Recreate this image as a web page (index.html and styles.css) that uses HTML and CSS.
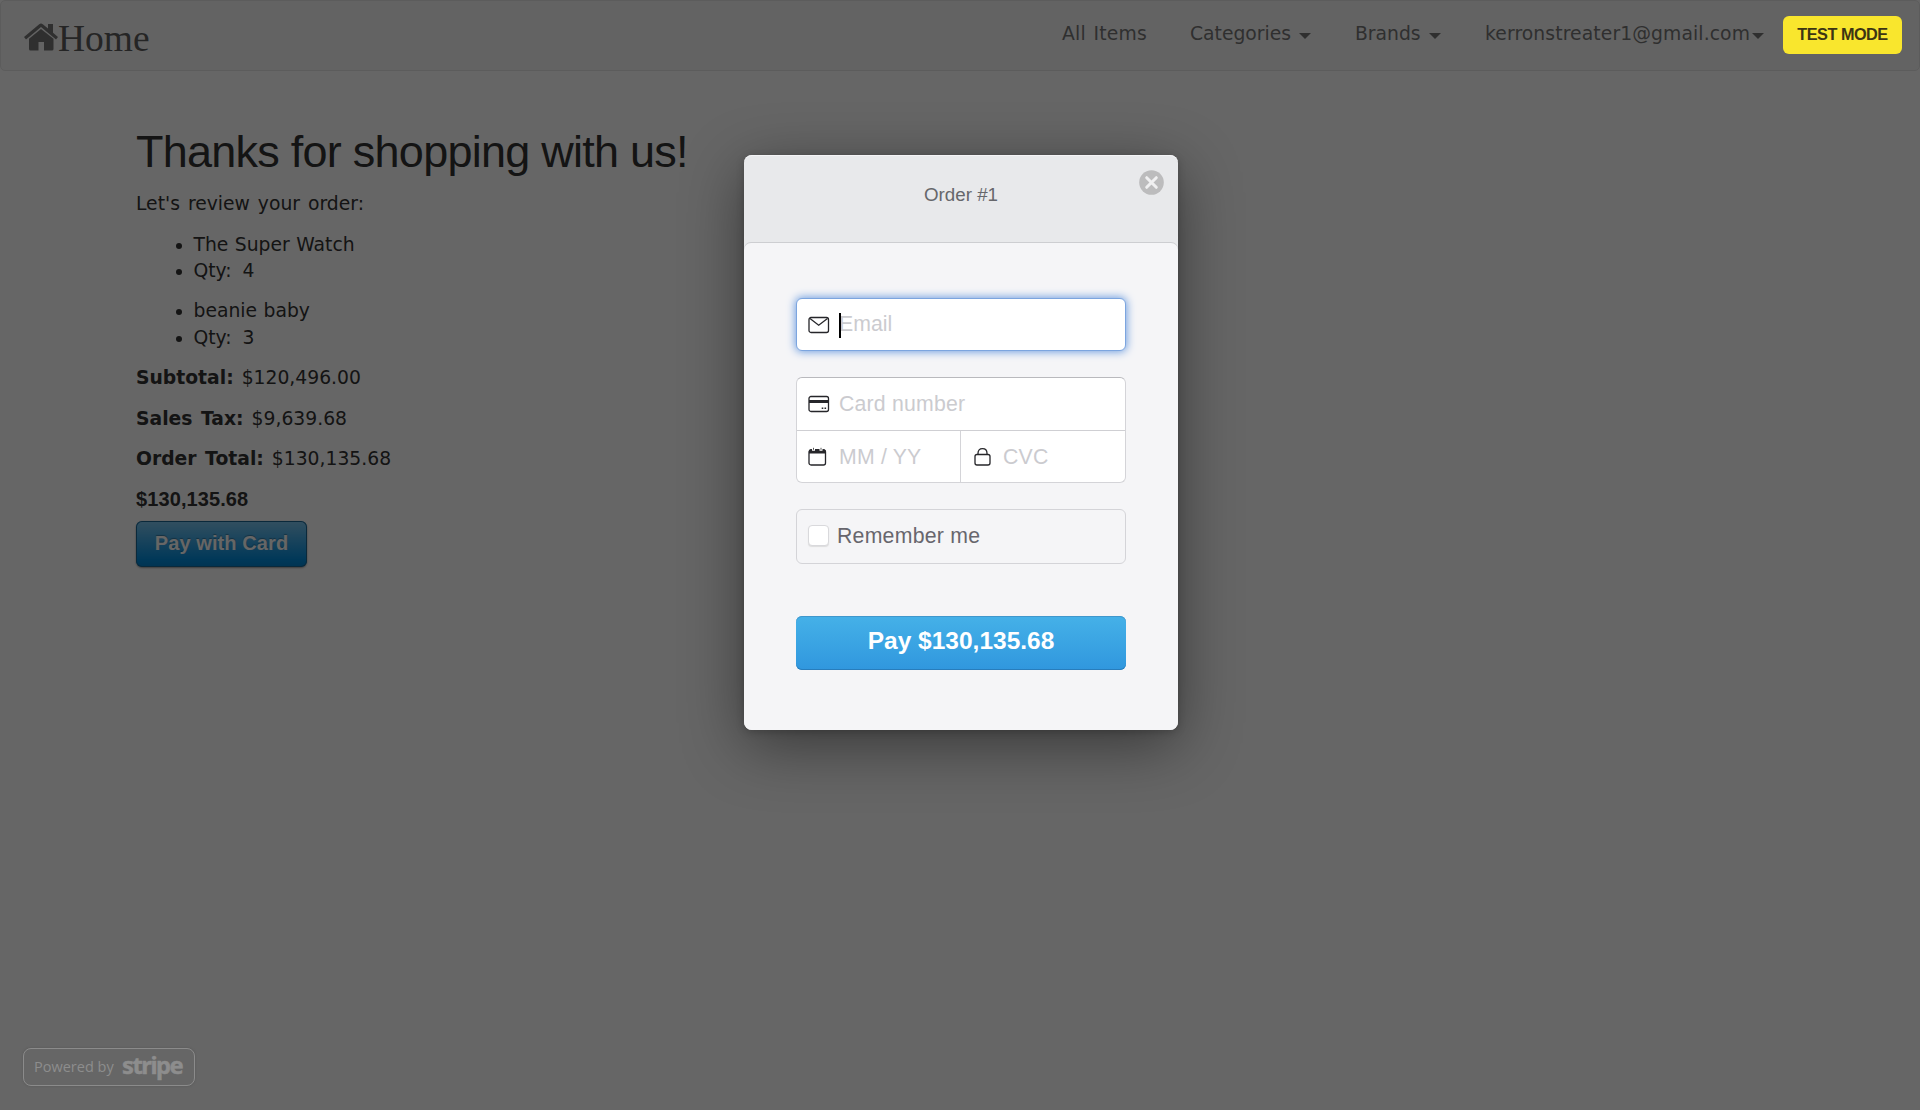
FILE: index.html
```html
<!DOCTYPE html>
<html lang="en">
<head>
<meta charset="utf-8">
<title>Checkout</title>
<link rel="stylesheet" href="styles.css">
</head>
<body>
<nav class="navbar">
  <a class="brand"><svg class="home" viewBox="0 0 34 28"><path d="M0 14 15.2 1.2Q17 0 18.8 1.2L24 5.6V1h5v8.8L34 14l-2 2.4L17 4 2 16.4z"/><path d="M5 15.7 17 5.9l12.5 9.8V26q0 1.5-1.5 1.5h-8V19h-5.5v8.5H6.500Q5 27.500 5 26z"/></svg><span>Home</span></a>
  <div class="links">
    <a class="items">All Items</a>
    <a class="categories">Categories <i class="caret"></i></a>
    <a class="brands">Brands <i class="caret"></i></a>
    <a class="account">kerronstreater1@gmail.com<i class="caret"></i></a>
  </div>
</nav>
<main class="order">
  <h1>Thanks for shopping with us!</h1>
  <p>Let's review your order:</p>
  <ul><li>The Super Watch</li><li class="qty">Qty: 4</li></ul>
  <ul><li>beanie baby</li><li class="qty">Qty: 3</li></ul>
  <p><b>Subtotal:</b> $120,496.00</p>
  <p><b>Sales Tax:</b> $9,639.68</p>
  <p><b>Order Total:</b> $130,135.68</p>
  <p class="amount">$130,135.68</p>
  <button class="pay-card">Pay with Card</button>
</main>
<div class="overlay">
  <div class="test-mode">TEST MODE</div>
  <section class="modal">
    <header class="modal-head">
      <span>Order #1</span>
      <svg class="close" viewBox="0 0 25 25"><circle cx="12.500" cy="12.500" r="12.300"/><path d="m7.700 7.700 9.600 9.600m0-9.600-9.600 9.600"/></svg>
    </header>
    <div class="modal-body">
      <div class="field email">
        <svg class="icon" viewBox="0 0 22 18"><rect x="1" y="1.500" width="19.500" height="15" rx="2"/><path d="m2 2.500 8.700 6.800 8.800-6.800"/></svg>
        <i class="cursor"></i><span>Email</span>
      </div>
      <div class="card">
        <div class="field number">
          <svg class="icon" viewBox="0 0 22 18"><rect x="1" y="1.500" width="19.500" height="15" rx="2"/><path class="fill" d="M1 5h19.500v3H1zM13.700 12.500h1.600V14h-1.600zM16.500 12.500h1.600V14h-1.600z"/></svg>
          <span>Card number</span>
        </div>
        <div class="field">
          <svg class="icon" viewBox="0 0 22 18"><rect x="1" y="2" width="16.500" height="15" rx="2"/><path class="fill" d="M1 5.500V3q0-2 3-2h10.500q3 0 3 2v2.500z"/><path class="ring" d="M5.500-.500v3.200M13-.500v3.200"/><path class="pin" d="M5.500-.200v2M13-.200v2"/></svg>
          <span>MM / YY</span>
        </div>
        <div class="field cvc">
          <svg class="icon" viewBox="0 0 22 18"><rect x="3" y="6.500" width="15" height="10.500" rx="2"/><path d="M6 6.500V5.300q0-4.600 4.500-4.600T15 5.300v1.200"/></svg>
          <span>CVC</span>
        </div>
      </div>
      <label class="remember"><i class="check"></i><span>Remember me</span></label>
      <button class="pay">Pay $130,135.68</button>
    </div>
  </section>
  <div class="powered"><span>Powered by</span><strong>stripe</strong></div>
</div>
</body>
</html>
```
FILE: styles.css
```css
* { box-sizing: border-box; }
body {
  margin: 0;
  height: 1110px;
  overflow: hidden;
  background: #fff;
  color: #333;
  font: 18.75px/26.6px "DejaVu Sans", Verdana, sans-serif;
}
button { font-family: "Liberation Sans", Arial, sans-serif; font-weight: bold; border: 0; padding: 0; }

.navbar {
  display: flex;
  justify-content: space-between;
  height: 71px;
  padding: 0 155px 0 23px;
  background: #f8f8f8;
  border: 1px solid #e7e7e7;
  border-radius: 5px;
  color: #777;
}
.brand { display: flex; align-items: flex-start; padding-top: 17px; font: 37.500px/42px "Liberation Serif", "Times New Roman", serif; color: #5e5e5e; }
.home { width: 34px; height: 28px; margin-top: 5px; fill: #777; }
.links { display: flex; padding-top: 20px; }
.links a { display: flex; align-items: center; justify-content: space-between; height: 26px; white-space: nowrap; }
.items { width: 84px; margin-right: 44px; letter-spacing: .2px; word-spacing: 1.500px; }
.categories { width: 121px; margin-right: 44px; }
.brands { width: 86px; margin-right: 44px; }
.account { width: 279px; letter-spacing: .1px; }
.caret { border: 6px solid transparent; border-top-color: #777; border-bottom: 0; margin-top: 3px; }

.order { padding: 56px 136px 0; word-spacing: 2px; }
h1 { margin: 0 0 14.500px; font: 45px/49.500px "Liberation Sans", Arial, sans-serif; letter-spacing: -.750px; word-spacing: 0; }
p { margin: 0 0 14px; }
ul { margin: 0 0 13.600px; padding-left: 57.500px; }
li { word-spacing: .5px; }
.qty { word-spacing: 5px; }
.amount { margin: -1px 0 9px; font: bold 20px/26px "Liberation Sans", Arial, sans-serif; letter-spacing: .1px; }
.pay-card {
  width: 171px;
  height: 46px;
  padding-bottom: 1px;
  border-radius: 6px;
  background: linear-gradient(#7dc5ee, #008cdd 85%, #0081cc);
  box-shadow: inset 0 0 0 1px #1b6694, 0 1px 2px rgba(0,0,0,.4);
  color: #fff;
  font-size: 20px;
  letter-spacing: .1px;
  text-shadow: 0 -1px 1px rgba(0,0,0,.3);
}

.overlay { position: absolute; inset: 0; background: rgba(0,0,0,.6); display: flex; justify-content: center; font-family: "Liberation Sans", Arial, sans-serif; }
.test-mode {
  position: absolute; top: 16px; right: 18px;
  width: 119px; height: 38px;
  border-radius: 6px;
  background: #f9e62d;
  color: #3d3513;
  font: bold 16.250px/36px "Liberation Sans", Arial, sans-serif;
  letter-spacing: -.5px;
  text-align: center;
}
.modal {
  width: 434px; height: 575px;
  margin: 155px 0 0 2px;
  border-radius: 8px;
  background: #e8e9eb;
  box-shadow: 0 15px 62px rgba(0,0,0,.45), 0 2px 9px rgba(0,0,0,.2);
}
.modal-head { position: relative; height: 88px; padding-top: 27px; text-align: center; font-size: 18.750px; color: #66676b; box-shadow: inset 0 1px #f4f4f6; border-radius: 8px; }
.close { position: absolute; top: 15px; right: 14px; width: 25px; height: 25px; fill: #bcbcbd; stroke: #f0f0f1; stroke-width: 3; stroke-linecap: round; }
.close circle { stroke: none; }
.modal-body { height: 487px; padding: 55px 52px 0; border-radius: 7px 7px 8px 8px; background: #f5f5f7; box-shadow: 0 -1px #cdced1; }
.field { display: flex; align-items: center; padding-left: 11px; color: #cbcbcf; font-size: 21.250px; letter-spacing: .2px; }
.field span { margin-top: 1px; }
.icon { width: 22px; height: 18px; margin-right: 9px; fill: none; stroke: #26262a; stroke-width: 1.300; overflow: visible; }
.icon .fill { fill: #26262a; stroke: none; }
.icon .ring { stroke: #fff; stroke-width: 3; }
.icon .pin { stroke: #555; stroke-width: 1; }
.email { position: relative; height: 53px; border: 1px solid #7ca5df; border-radius: 6px; background: #fff; box-shadow: 0 0 8px 1px #709fe0; }
.email span { margin-top: -1px; letter-spacing: 0; }
.cursor { position: absolute; left: 42px; top: 14px; width: 2px; height: 25px; background: #000; }
.card { display: grid; grid-template-columns: 163px 1fr; grid-template-rows: 53px 1fr; height: 106px; margin-top: 26px; border: 1px solid #d4d4d8; border-top: 1px solid #b9b9bd; border-radius: 6px; background: #fff; }
.number { grid-column: 1 / 3; border-bottom: 1px solid #cfcfd3; }
.cvc { border-left: 1px solid #d4d4d8; }
.remember { display: flex; align-items: center; height: 55px; margin-top: 26px; padding-left: 11px; border: 1px solid #d4d4d8; border-radius: 6px; font-size: 21.250px; letter-spacing: .25px; color: #67666d; }
.check { width: 21px; height: 21px; margin: 0 8px 2px 0; border: 1px solid #d9d9dc; border-radius: 4px; background: #fff; box-shadow: 0 1px 1px #ddd; }
.pay { display: block; width: 330px; height: 54px; margin-top: 52px; padding-bottom: 5px; border-radius: 6px; background: linear-gradient(#45b1e8, #3097de); box-shadow: inset 0 1px #4097cc, inset 0 -1px #287dbc; color: #fff; font-size: 24.500px; }

.powered { position: absolute; left: 23px; bottom: 24px; display: flex; align-items: center; width: 172px; height: 38px; padding-left: 10px; border: 1px solid #8b8b8b; border-radius: 8px; color: #8d8d8d; box-shadow: 0 0 2px #555; font: 500 14.500px "Open Sans", sans-serif; }
.powered span { width: 88px; margin-top: -2px; white-space: nowrap; }
.powered strong { font: bold 24px/30px "Noto Sans", sans-serif; letter-spacing: -1.500px; margin-top: -5px; transform: scaleX(.99); transform-origin: left; -webkit-text-stroke: .5px #8d8d8d; }
```
